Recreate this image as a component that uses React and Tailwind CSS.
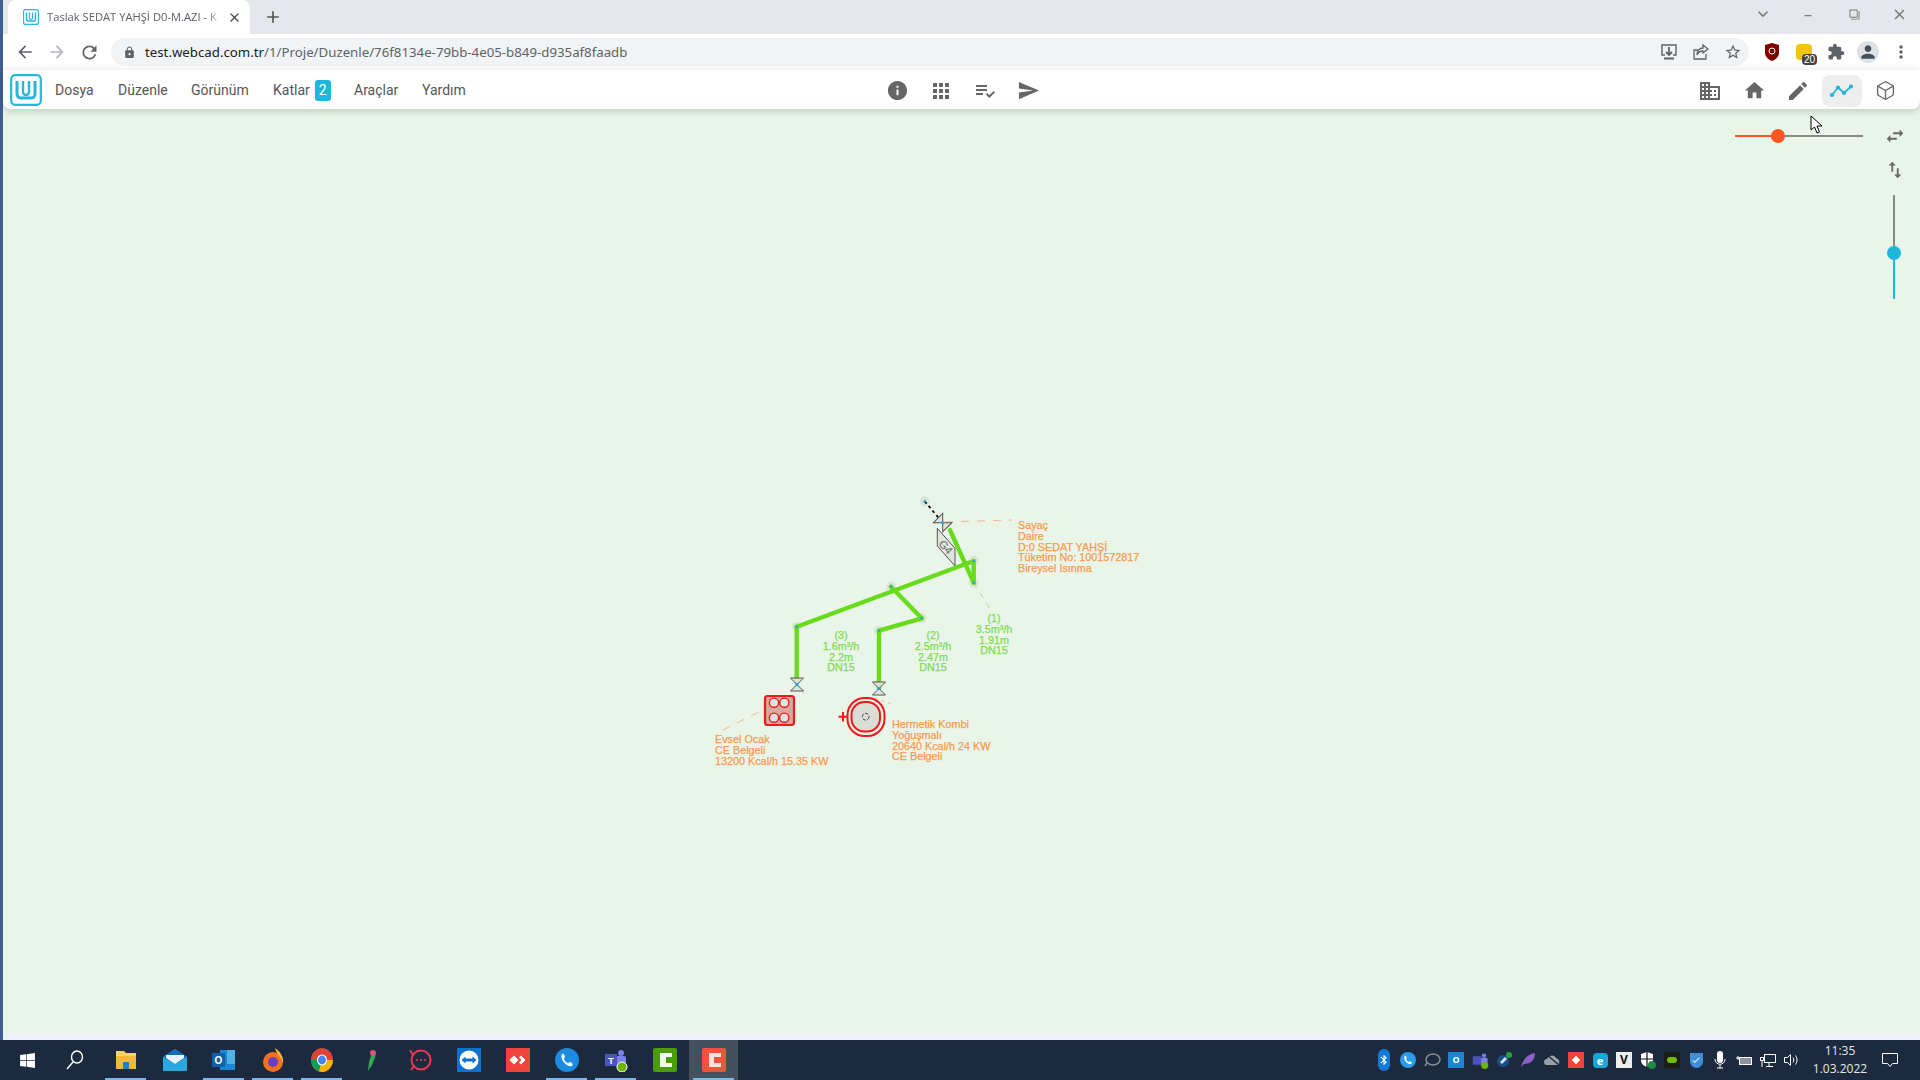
import {
  MdArrowBack, MdArrowForward, MdRefresh, MdLock, MdStarBorder, MdExtension, MdMoreVert, MdClose, MdAdd,
  MdInfo, MdApps, MdPlaylistAddCheck, MdSend, MdHome, MdEdit, MdSwapHoriz, MdSwapVert, MdDomain, MdPerson,
  MdKeyboardArrowDown, MdMinimize, MdFilterNone, MdBluetooth, MdCheck,
} from "react-icons/md";
import { FiBox } from "react-icons/fi";
import { FaWindows } from "react-icons/fa";

const navItems = [
  { name: "Dosya", w: "w-[63px]" },
  { name: "Düzenle", w: "w-[73px]" },
  { name: "Görünüm", w: "w-[82px]" },
  { name: "Katlar", badge: "2", w: "w-[81px]" },
  { name: "Araçlar", w: "w-[68px]" },
  { name: "Yardım", w: "w-[60px]" },
];

function Logo({ size = 32 }) {
  return (
    <svg width={size} height={size} viewBox="0 0 32 32" fill="none">
      <rect x="1.2" y="1.2" width="29.6" height="29.6" rx="4" stroke="#29b6d8" strokeWidth="2.2" fill="#fff" />
      <path d="M7 7v13a4 4 0 0 0 4 4h10a4 4 0 0 0 4-4V7" stroke="#29b6d8" strokeWidth="3" />
      <path d="M13 7v11a3 3 0 0 0 6 0V7" stroke="#29b6d8" strokeWidth="2.4" />
    </svg>
  );
}

function TabBar() {
  return (
    <div className="flex h-[34px] items-end bg-[#e4e7eb]">
      <div className="ml-[5px] flex h-[34px] w-[242px] items-center rounded-t-lg bg-white pl-[15px]">
        <Logo size={16} />
        <span className="ml-[8px] w-[175px] overflow-hidden whitespace-nowrap text-[11.2px] text-[#5a5f66] [font-family:'Open_Sans',sans-serif] [mask-image:linear-gradient(to_right,black_92%,transparent)]">
          Taslak SEDAT YAHŞİ D0-M.AZI - K
        </span>
        <MdClose size={15} className="ml-[5px] text-[#444]" />
      </div>
      <div className="flex h-[34px] w-[46px] items-center justify-center">
        <MdAdd size={20} className="text-[#555]" />
      </div>
      <div className="ml-auto flex h-[28px] items-center self-start text-[#777]">
        <MdKeyboardArrowDown size={20} className="mr-[28px]" />
        <MdMinimize size={14} className="mr-[34px] -translate-y-[3px]" />
        <MdFilterNone size={11} className="mr-[31px] -scale-x-100" />
        <MdClose size={17} className="mr-[12px]" />
      </div>
    </div>
  );
}

function DownloadIcon() {
  return (
    <svg width="18" height="18" viewBox="0 0 18 18" fill="none" stroke="#5f6368" strokeWidth="1.4">
      <path d="M5 12H2V2h14v10h-3" />
      <path d="M9 4v8M6 9l3 3 3-3" strokeWidth="1.8" />
      <path d="M4 15.5h10" strokeWidth="2" />
    </svg>
  );
}

function ShareIcon() {
  return (
    <svg width="18" height="18" viewBox="0 0 18 18" fill="none" stroke="#5f6368" strokeWidth="1.3">
      <path d="M14 11v5H2V7h4" />
      <path d="M11 2l5 4-5 4V8c-3 0-5 1-6 4 0-4 2-7 6-7z" />
    </svg>
  );
}

function UrlBar() {
  return (
    <div className="flex h-[36px] items-center bg-white">
      <MdArrowBack size={20} className="ml-[12px] text-[#5f6368]" />
      <MdArrowForward size={20} className="ml-[12px] text-[#b4b7bb]" />
      <MdRefresh size={21} className="ml-[12px] text-[#5f6368]" />
      <div className="ml-[11px] flex h-[28px] w-[1638px] items-center rounded-full bg-[#f1f3f4]">
        <MdLock size={13} className="ml-[12px] text-[#5f6368]" />
        <span className="ml-[9px] translate-y-[1px] text-[13.25px] text-[#5f6368] [font-family:'Noto_Sans',sans-serif]">
          <span className="text-[#202124]">test.webcad.com.tr</span>/1/Proje/Duzenle/76f8134e-79bb-4e05-b849-d935af8faadb
        </span>
        <div className="ml-auto flex items-center gap-[14px] pr-[7px]">
          <DownloadIcon />
          <ShareIcon />
          <MdStarBorder size={18} className="text-[#5f6368]" />
        </div>
      </div>
      <svg width="16" height="18" viewBox="0 0 16 18" className="ml-[15px]">
        <path d="M8 0l7 2v8c0 4-4 7-7 8-3-1-7-4-7-8V2z" fill="#800000" />
        <circle cx="8" cy="8" r="3" fill="none" stroke="#fff" strokeWidth="1" />
      </svg>
      <div className="relative ml-[16px] h-[16px] w-[16px] rounded-sm bg-[#f2c30f]">
        <span className="absolute left-[6px] top-[10px] rounded-sm bg-[#444] px-[2px] text-[10px] leading-[11px] text-white [font-family:'Liberation_Sans',sans-serif]">
          20
        </span>
      </div>
      <MdExtension size={18} className="ml-[15px] text-[#5f6368]" />
      <div className="ml-[12px] flex h-[22px] w-[22px] items-center justify-center rounded-full bg-[#dfe1e5]">
        <MdPerson size={20} className="text-[#444f5e]" />
      </div>
      <MdMoreVert size={20} className="ml-[12px] text-[#5f6368]" />
    </div>
  );
}

function AppNav() {
  return (
    <header className="relative z-10 flex h-[39px] items-center rounded-br-lg rounded-bl-lg bg-white pt-[2px] shadow-[0_2px_8px_rgba(0,0,0,0.18)]">
      <div className="ml-[7px] -mt-[2px]">
        <Logo size={32} />
      </div>
      <nav className="ml-[13px] flex items-center text-[14px] text-[#555] [font-family:Roboto,sans-serif]">
        {navItems.map((item) => (
          <span key={item.name} className={`flex items-center ${item.w}`}>
            {item.name}
            {item.badge && (
              <span className="ml-[5px] flex h-[21px] w-[16px] items-center justify-center rounded-[3px] bg-[#1fb6dc] text-white">
                {item.badge}
              </span>
            )}
          </span>
        ))}
      </nav>
      <div className="ml-[404px] flex items-center gap-[20px] text-[#666]">
        <MdInfo size={23} />
        <MdApps size={24} />
        <MdPlaylistAddCheck size={24} />
        <MdSend size={23} />
      </div>
      <div className="ml-auto flex items-center text-[#666]">
        <div className="flex w-[44px] justify-center">
          <MdDomain size={24} />
        </div>
        <div className="flex w-[44px] justify-center">
          <MdHome size={23} />
        </div>
        <div className="flex w-[44px] justify-center">
          <MdEdit size={24} />
        </div>
        <div className="ml-[2px] flex h-[32px] w-[40px] items-center justify-center rounded-lg bg-[#eeeeee]">
          <svg width="24" height="14" viewBox="0 0 24 14" fill="none" stroke="#1fb6dc" strokeWidth="1.8">
            <path d="M2 11l6-7.500 6 5.500 7-6.500" />
            <circle cx="2" cy="11" r="1.2" fill="#1fb6dc" />
            <circle cx="8" cy="3.5" r="1.2" fill="#1fb6dc" />
            <circle cx="14" cy="9" r="1.2" fill="#1fb6dc" />
            <circle cx="21" cy="2.5" r="1.2" fill="#1fb6dc" />
          </svg>
        </div>
        <div className="ml-[1px] flex w-[44px] justify-center">
          <FiBox size={21} strokeWidth={1.5} />
        </div>
        <div className="w-[13px]" />
      </div>
    </header>
  );
}

const greenSegs = [
  [950, 530, 973.7, 582.7],
  [973.7, 582.7, 973.7, 561],
  [973.7, 561, 796.7, 626.7],
  [796.7, 626.7, 796.7, 682],
  [891, 586.7, 921.7, 618.3],
  [921.7, 618.3, 879, 630.7],
  [879, 630.7, 879, 688],
];
const nodes = [
  [924.7, 501.3], [973.7, 561], [973.7, 582.7], [891, 586.7], [921.7, 618.3], [796.7, 626.7], [879, 630.7],
];

function Valve({ x, y }) {
  return (
    <g stroke="#555" strokeWidth="1" fill="#dfe5dc">
      <path d={`M${x - 6.5} ${y - 6.5}h13l-13 13h13z`} />
      <circle cx={x} cy={y} r="1.6" fill="#1fa6dc" stroke="none" />
    </g>
  );
}

function Diagram() {
  return (
    <svg className="absolute left-0 top-0" width="1920" height="1080" fill="none">
      {nodes.map(([x, y]) => (
        <circle key={`${x}-${y}`} cx={x} cy={y} r="5" fill="#dbe5d8" />
      ))}
      <g stroke="#f4b58a" strokeWidth="1" strokeDasharray="8 8">
        <path d="M945 522L1012 520" />
        <path d="M787 698L717 733" />
        <path d="M866 716l9-18 M875 698l17 6" strokeDasharray="3 4" />
        <path d="M797 688l12 8" strokeDasharray="2 5" />
      </g>
      <path d="M973.7 582.7L993 614" stroke="#a8e08a" strokeDasharray="6 6" />
      <path d="M924.7 501.3L942.7 522.7" stroke="#111" strokeWidth="1.8" strokeDasharray="3 3" />
      <g transform="rotate(-45 942.7 522.7)">
        <Valve x={942.7} y={522.7} />
      </g>
      <path d="M937.3 528.3L955 548.3V566L937.3 546z" fill="#dfe5dc" stroke="#555" />
      <text x="946" y="551" fontSize="11" fill="#666" textAnchor="middle" transform="rotate(48 946 547)" fontFamily="Liberation Sans">G4</text>
      <g stroke="#68dc1c" strokeWidth="4.4" strokeLinecap="round">
        {greenSegs.map(([a, b, c, d]) => (
          <line key={`${a}-${b}`} x1={a} y1={b} x2={c} y2={d} />
        ))}
      </g>
      {nodes.map(([x, y]) => (
        <circle key={`d${x}-${y}`} cx={x} cy={y} r="1.3" fill="#1fa6dc" />
      ))}
      <Valve x={797} y={684.5} />
      <Valve x={879} y={688.5} />
      <rect x="765" y="696" width="29" height="29" rx="2.5" fill="#d8a9a0" stroke="#f01818" strokeWidth="2.2" />
      {[[774, 702.7], [784.3, 702.7], [774, 717.7], [784.3, 717.7]].map(([x, y]) => (
        <circle key={`${x}-${y}`} cx={x} cy={y} r="4.6" fill="#dfe5dc" stroke="#f01818" strokeWidth="1.4" />
      ))}
      <rect x="847.5" y="698" width="37" height="38" rx="17" fill="#e8f3e6" stroke="#f01818" strokeWidth="2" />
      <rect x="851.5" y="702" width="28.500" height="29.500" rx="13" fill="#d9ddd6" stroke="#f01818" strokeWidth="2" />
      <path d="M838.5 716.7h9M843 712v9.4" stroke="#f01818" strokeWidth="2" />
      <circle cx="865.7" cy="716.7" r="3.4" stroke="#444" strokeDasharray="3.500 1.500" />
    </svg>
  );
}

function Label({ className, lines }) {
  return (
    <div className={`absolute whitespace-nowrap text-[10.8px] leading-[10.8px] [font-family:'Liberation_Sans',sans-serif] [-webkit-text-stroke:0.25px] ${className}`}>
      {lines.map((l) => (
        <div key={l}>{l}</div>
      ))}
    </div>
  );
}

function Canvas() {
  return (
    <main className="relative flex-1 bg-[#eaf5e9]">
      <div className="absolute bottom-0 left-0 right-0 h-[7px] bg-[#f0f1f8]" />
    </main>
  );
}

function Overlays() {
  return (
    <div className="pointer-events-none absolute left-0 top-0 h-[1080px] w-[1920px]">
      <Diagram />
      <Label className="left-[1018px] top-[520px] text-[#f89a4e]" lines={["Sayaç", "Daire", "D:0 SEDAT YAHŞİ", "Tüketim No: 1001572817", "Bireysel Isınma"]} />
      <Label className="left-[715px] top-[734px] text-[#f89a4e]" lines={["Evsel Ocak", "CE Belgeli", "13200 Kcal/h 15.35 KW"]} />
      <Label className="left-[892px] top-[719px] text-[#f89a4e]" lines={["Hermetik Kombi", "Yoğuşmalı", "20640 Kcal/h 24 KW", "CE Belgeli"]} />
      <Label className="left-[781px] top-[630px] w-[120px] text-center text-[#7edc52]" lines={["(3)", "1.6m³/h", "2.2m", "DN15"]} />
      <Label className="left-[873px] top-[630px] w-[120px] text-center text-[#7edc52]" lines={["(2)", "2.5m³/h", "2.47m", "DN15"]} />
      <Label className="left-[934px] top-[613px] w-[120px] text-center text-[#7edc52]" lines={["(1)", "3.5m³/h", "1.91m", "DN15"]} />

      {/* sliders */}
      <div className="absolute left-[1735px] top-[135px] h-[2px] w-[43px] bg-[#ff5722]" />
      <div className="absolute left-[1778px] top-[135px] h-[2px] w-[85px] bg-[#888]" />
      <div className="absolute left-[1771px] top-[129px] h-[14px] w-[14px] rounded-full bg-[#ff5722]" />
      <MdSwapHoriz size={22} className="absolute left-[1884px] top-[125px] text-[#666]" />
      <MdSwapVert size={22} className="absolute left-[1884px] top-[159px] text-[#666]" />
      <div className="absolute left-[1893px] top-[195px] h-[58px] w-[2px] bg-[#888]" />
      <div className="absolute left-[1893px] top-[253px] h-[46px] w-[2px] bg-[#1fb6dc]" />
      <div className="absolute left-[1887px] top-[246px] h-[14px] w-[14px] rounded-full bg-[#1fb6dc]" />

      {/* mouse cursor */}
      <svg className="absolute left-[1810px] top-[115px]" width="14" height="19" viewBox="0 0 14 19">
        <path d="M1 1v14l3.5-3 2.5 6 2.5-1-2.5-6h5z" fill="#fff" stroke="#000" strokeWidth="1" />
      </svg>
    </div>
  );
}

const appIcons = [
  { key: "win", el: <FaWindows size={17} className="text-white" /> },
  {
    key: "search",
    el: (
      <svg width="18" height="20" viewBox="0 0 18 20" fill="none" stroke="#fff" strokeWidth="1.4" className="-translate-x-[2px]">
        <ellipse cx="11" cy="7" rx="5.500" ry="6" />
        <path d="M7 12l-6 7" />
      </svg>
    ),
  },
  {
    key: "files", on: true,
    el: (
      <svg width="22" height="20" viewBox="0 0 22 20">
        <path d="M1 1h8l2 2h10v16H1z" fill="#f6d365" />
        <path d="M1 6h20v13H1z" fill="#f2b93c" />
        <path d="M8 12h6v7H8z" fill="#1c7fd0" />
      </svg>
    ),
  },
  {
    key: "mail",
    el: (
      <svg width="24" height="22" viewBox="0 0 24 22">
        <path d="M0 8L12 0l12 8v14H0z" fill="#2aa8e0" />
        <path d="M0 8l12 7 12-7-12-8z" fill="#0f6cbd" />
        <path d="M3 6h18v3l-9 6-9-6z" fill="#e8f4fb" />
      </svg>
    ),
  },
  {
    key: "outlook", on: true,
    el: (
      <svg width="24" height="22" viewBox="0 0 24 22">
        <path d="M8 1h15v20H8z" fill="#1a86d0" />
        <path d="M15 1h8v7h-8zM15 8h8v7h-8z" fill="#50b0e8" />
        <rect y="4" width="13" height="14" fill="#0f5ea8" />
        <text x="6.5" y="15" fontSize="10" fill="#fff" textAnchor="middle" fontFamily="Liberation Sans" fontWeight="700">O</text>
      </svg>
    ),
  },
  {
    key: "firefox", on: true,
    el: (
      <svg width="24" height="24" viewBox="0 0 24 24">
        <circle cx="12" cy="14" r="10" fill="#f2701e" />
        <path d="M14 0c6 4 9 10 8 15-2-6-6-8-8-15z" fill="#fbb03b" />
        <circle cx="12" cy="14" r="5" fill="#6a3fc4" />
      </svg>
    ),
  },
  {
    key: "chrome", on: true,
    el: (
      <svg width="22" height="24" viewBox="0 0 22 24">
        <ellipse cx="11" cy="12" rx="11" ry="12" fill="#db4437" />
        <path d="M11 12L0 12a11 12 0 0 0 8 11.5z" fill="#0f9d58" />
        <path d="M11 12l-3 11.5A11 12 0 0 0 22 12z" fill="#f4b400" />
        <ellipse cx="11" cy="12" rx="5" ry="5.5" fill="#fff" />
        <ellipse cx="11" cy="12" rx="4" ry="4.4" fill="#4285f4" />
      </svg>
    ),
  },
  {
    key: "parrot",
    el: (
      <svg width="18" height="24" viewBox="0 0 18 24">
        <path d="M10 4c3 0 4 3 3 6l-3 7-4 6 1-9z" fill="#34a853" />
        <circle cx="11" cy="5" r="3" fill="#d8527a" />
      </svg>
    ),
  },
  {
    key: "rocket",
    el: (
      <svg width="24" height="22" viewBox="0 0 24 22" fill="none" stroke="#e8384f" strokeWidth="2">
        <circle cx="13" cy="11" r="9.5" />
        <path d="M5 6L2 1M6 17l-3 4" />
        <path d="M9 11h.01M13 11h.01M17 11h.01" strokeLinecap="round" />
      </svg>
    ),
  },
  {
    key: "teamviewer",
    el: (
      <svg width="24" height="24" viewBox="0 0 24 24">
        <rect width="24" height="24" fill="#0e72cf" />
        <circle cx="12" cy="12" r="9.5" fill="#fff" />
        <path d="M4.5 12l4-3.5v2h7v-2l4 3.5-4 3.5v-2h-7v2z" fill="#0e72cf" />
      </svg>
    ),
  },
  {
    key: "anydesk",
    el: (
      <svg width="24" height="24" viewBox="0 0 24 24">
        <rect width="24" height="24" fill="#ef443b" />
        <path d="M8 7.500l4.500 4.500L8 16.500 3.500 12zM15 7.500l4.500 4.500-4.500 4.500-2-2 2.500-2.500-2.500-2.500z" fill="#fff" />
      </svg>
    ),
  },
  {
    key: "phone", on: true,
    el: (
      <svg width="24" height="24" viewBox="0 0 24 24">
        <circle cx="12" cy="12" r="12" fill="#1c8be0" />
        <path d="M7 6c2-2 3 2 3 3s-1 1-1 2 3 4 4 4 1-1 2-1 4 2 2 4c-5 2-13-7-10-12z" fill="#eaf6ff" />
      </svg>
    ),
  },
  {
    key: "teams", on: true,
    el: (
      <svg width="24" height="24" viewBox="0 0 24 24">
        <circle cx="17" cy="5" r="3" fill="#7b83eb" />
        <rect x="12" y="8" width="10" height="11" rx="2" fill="#7b83eb" />
        <rect x="1" y="6" width="12" height="12" fill="#4b53bc" />
        <text x="7" y="15.500" fontSize="9" fill="#fff" textAnchor="middle" fontFamily="Liberation Sans" fontWeight="700">T</text>
        <circle cx="18" cy="19" r="5" fill="#6bb700" stroke="#fff" strokeWidth="1" />
      </svg>
    ),
  },
  {
    key: "camtasia-green",
    el: (
      <svg width="24" height="24" viewBox="0 0 24 24">
        <rect width="24" height="24" rx="2" fill="#4a9e0c" />
        <path d="M19 5H7v14h12v-4h-6V9h6z" fill="#f2f7ee" />
      </svg>
    ),
  },
  {
    key: "camtasia-red", active: true, on: true,
    el: (
      <svg width="24" height="24" viewBox="0 0 24 24">
        <rect width="24" height="24" rx="2" fill="#f0523a" />
        <path d="M19 5H7v14h12v-4h-7V9h7z" fill="#f8e3dc" />
      </svg>
    ),
  },
];

const tray = [
  <div key="bt" className="flex h-[22px] w-[12px] items-center justify-center rounded-full bg-[#1579d8]"><MdBluetooth size={14} className="text-white" /></div>,
  <svg key="ph" width="16" height="16" viewBox="0 0 24 24"><circle cx="12" cy="12" r="12" fill="#2a9be8" /><path d="M7 6c2-2 3 2 3 3s-1 1-1 2 3 4 4 4 1-1 2-1 4 2 2 4c-5 2-13-7-10-12z" fill="#fff" /></svg>,
  <svg key="ch" width="17" height="14" viewBox="0 0 17 14" fill="none" stroke="#8a8f94" strokeWidth="1.5"><ellipse cx="9" cy="6.500" rx="7" ry="5.500" /><path d="M3 10l-2 3M6 6.500h.01M9 6.500h.01M12 6.500h.01" /></svg>,
  <div key="ol" className="flex h-[16px] w-[16px] items-center justify-center bg-[#1a86d0] text-[9px] font-bold text-white">O</div>,
  <svg key="te" width="17" height="17" viewBox="0 0 24 24"><circle cx="17" cy="5" r="3" fill="#7b83eb" /><rect x="12" y="8" width="10" height="11" rx="2" fill="#7b83eb" /><rect x="1" y="6" width="12" height="12" fill="#4b53bc" /><circle cx="18" cy="19" r="5" fill="#6bb700" /></svg>,
  <svg key="pl" width="16" height="16" viewBox="0 0 16 16"><circle cx="7" cy="9" r="6" fill="#1b4f8a" /><path d="M4 10l5-5 2 2-5 5z" fill="#cfe3f5" /><circle cx="13" cy="3" r="3" fill="#2ea043" /></svg>,
  <svg key="fe" width="16" height="16" viewBox="0 0 16 16"><path d="M1 15C3 7 8 2 15 1c0 7-4 11-11 11z" fill="#8e5fc4" /></svg>,
  <svg key="cl" width="17" height="12" viewBox="0 0 17 12"><path d="M3 11a3 3 0 0 1 0-6 5 5 0 0 1 9-1 4 4 0 0 1 2 7z" fill="#9aa0a6" /><path d="M3 1l12 10" stroke="#1b2a3e" strokeWidth="1.500" /></svg>,
  <div key="ad" className="flex h-[16px] w-[16px] items-center justify-center bg-[#ef443b]"><div className="h-[6px] w-[6px] rotate-45 bg-white" /></div>,
  <div key="ee" className="flex h-[15px] w-[15px] items-center justify-center rounded-[4px] bg-[#19a6d8] text-[11px] font-bold leading-none text-white">e</div>,
  <div key="vv" className="flex h-[16px] w-[16px] items-center justify-center bg-[#eee] text-[12px] font-bold leading-none text-[#111]">V</div>,
  <svg key="sh" width="16" height="17" viewBox="0 0 16 17"><path d="M7 0l6 2v6c0 4-3 6-6 7-3-1-6-3-6-7V2z" fill="#fff" /><path d="M7 0v15M1 7h12" stroke="#111" strokeWidth="1.200" /><circle cx="12" cy="13" r="4" fill="#1d8a3d" /></svg>,
  <div key="nv" className="flex h-[16px] w-[16px] items-center justify-center bg-[#1a1f16]"><div className="h-[6px] w-[10px] rounded-full bg-[#76b900]" /></div>,
  <div key="bs" className="flex h-[15px] w-[13px] items-center justify-center rounded-b-full bg-[#3c8fd8]"><MdCheck size={10} className="text-white" /></div>,
  <svg key="mi" width="12" height="18" viewBox="0 0 12 18"><rect x="3" y="0" width="6" height="12" rx="3" fill="#fff" /><path d="M1 8c0 7 10 7 10 0M6 14v3M3 17h6" fill="none" stroke="#fff" /></svg>,
  <svg key="ba" width="16" height="11" viewBox="0 0 16 11" fill="none" stroke="#fff"><rect x="3.500" y="2.500" width="12" height="7" fill="#fff" fillOpacity=".5" /><path d="M0 3h3M2 1v4" /></svg>,
  <svg key="nw" width="16" height="15" viewBox="0 0 16 15" fill="none" stroke="#fff"><rect x="4.500" y="1.500" width="11" height="8" /><path d="M.5 4.500h3v3h-3zM2 8v6M9 10v3M6 13.500h7" /></svg>,
  <svg key="vo" width="16" height="14" viewBox="0 0 16 14" fill="none" stroke="#fff"><path d="M.5 4.500h3l3-3v11l-3-3h-3z" /><path d="M9 4.500c1 1.500 1 3.500 0 5M11.500 2.500c2 3 2 6 0 9" /></svg>,
];

function Taskbar() {
  return (
    <footer className="flex h-[40px] items-center bg-[#1b2a3e] pl-[3px]">
      {appIcons.map((a) => (
        <div key={a.key} className={`relative flex h-[40px] w-[49px] items-center justify-center ${a.active ? "bg-[#45505f]" : ""}`}>
          {a.el}
          {a.on && <div className="absolute bottom-0 left-[4px] right-[4px] h-[2px] bg-[#7ab6e6]" />}
        </div>
      ))}
      <div className="ml-auto flex items-center">
        {tray.map((t, i) => (
          <div key={i} className="flex h-[40px] w-[24px] items-center justify-center">
            {t}
          </div>
        ))}
        <div className="w-[72px] text-center text-[12px] leading-[18px] text-[#e8e8e8] [font-family:'Open_Sans',sans-serif]">
          <div>11:35</div>
          <div>1.03.2022</div>
        </div>
        <div className="ml-[6px] mr-[22px] flex w-[16px] justify-center">
          <svg width="16" height="16" viewBox="0 0 16 16" fill="none" stroke="#fff">
            <path d="M.5 1.500h15v10h-5l-2.500 3-2.500-3h-5z" />
          </svg>
        </div>
      </div>
    </footer>
  );
}

export default function App() {
  return (
    <div className="relative flex h-[1080px] w-[1920px] flex-col overflow-hidden bg-[#eaf5e9]">
      <div className="flex h-[1040px]">
        <div className="w-[3px] bg-[#3f5f8f]" />
        <div className="flex flex-1 flex-col">
          <TabBar />
          <UrlBar />
          <AppNav />
          <Canvas />
        </div>
      </div>
      <Taskbar />
      <Overlays />
    </div>
  );
}
